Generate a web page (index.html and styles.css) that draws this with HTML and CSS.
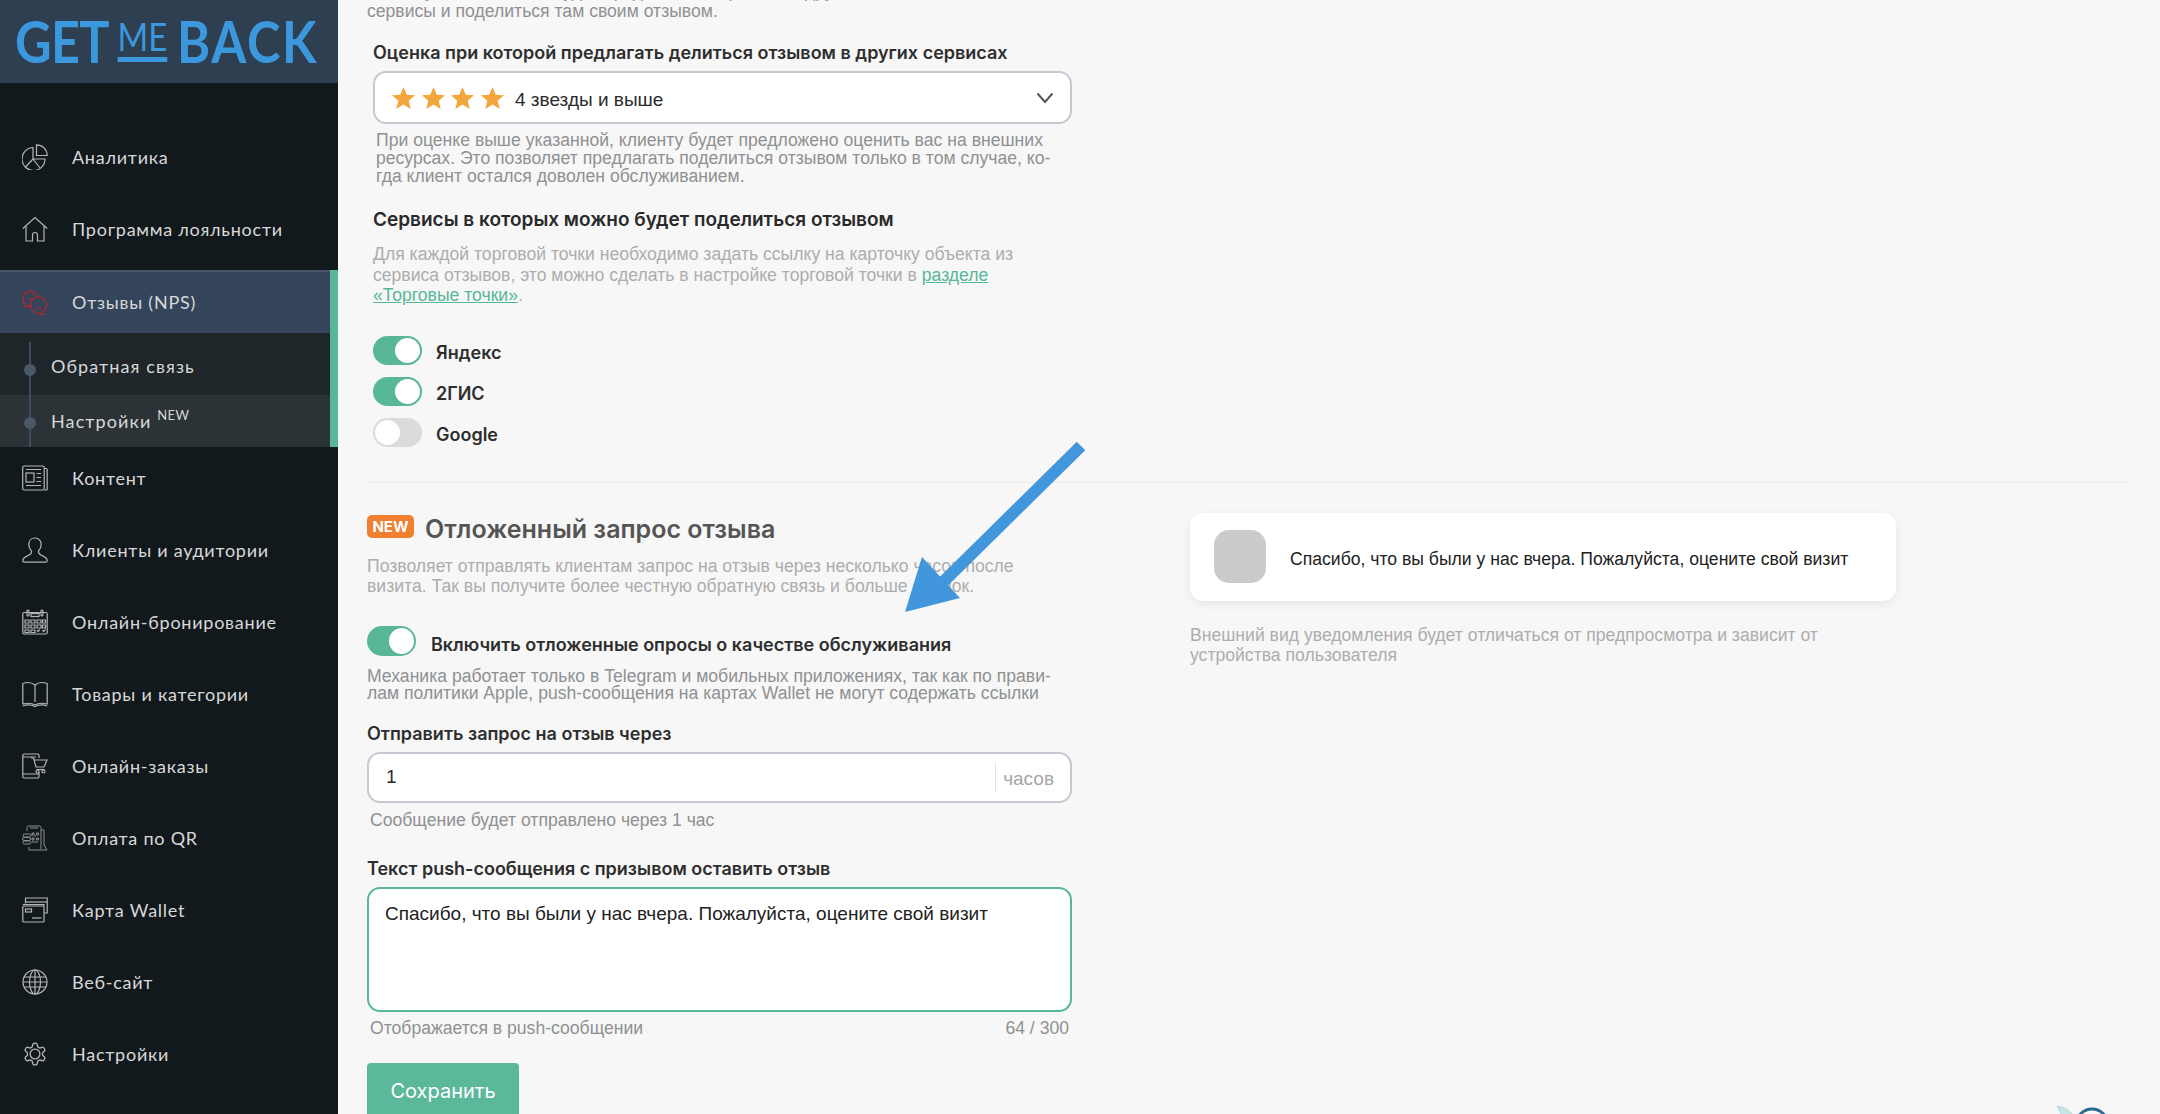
FILE: index.html
```html
<!DOCTYPE html>
<html lang="ru">
<head>
    <meta charset="UTF-8">
    <meta name="viewport" content="width=device-width, initial-scale=1.0">
    <title>GetMeBack - Отзывы (NPS)</title>
    <link rel="stylesheet" href="styles.css">
</head>
<body>
<div class="app">
    <aside class="sidebar">
        <div class="logo">
            <div class="logo-inner">
                <span class="logo-get">GET</span>
                <span class="logo-me">ME</span>
                <span class="logo-back">BACK</span>
            </div>
        </div>
        <nav class="nav">
            <a class="nav-item">
                <svg class="nav-icon" viewBox="0 0 26 26"><path d="M11 3.5A11.5 11.5 0 1 0 23 15H11Z"/><path d="M14.5 .8A10.7 10.7 0 0 1 25.2 11.5H14.5Z"/><path d="M11 15L3.5 23M11 15l7 9"/></svg>
                <span>Аналитика</span>
            </a>
            <a class="nav-item">
                <svg class="nav-icon" viewBox="0 0 26 26"><path d="M.8 12.5L13 1.5l12.2 11"/><path d="M4 10v15h6.5v-6a2.5 2.5 0 0 1 5 0v6H22V10"/></svg>
                <span>Программа лояльности</span>
            </a>
            <div class="nav-group">
                <a class="nav-item nav-active">
                    <svg class="nav-icon icon-red" viewBox="0 0 26 26"><path d="M3.5 15.5C1.5 14 .8 12 .8 9.500A7.700 7.700 0 0 1 16 8M3.500 15.500l-.5 3 4-2c1 .3 2 .4 3 .2"/><path d="M8.500 16a8 8 0 1 1 11.500 7.200l2 2.500-5-1.200A8 8 0 0 1 8.500 16Z"/><path d="M5.500 9.500q2.500 2 5 0M14 20q2.500-2 5 0"/><path d="M5.800 6.500h.8M10 6.500h.8M14.500 15h.8M18.500 15h.8"/></svg>
                    <span>Отзывы (NPS)</span>
                </a>
                <div class="sub-list">
                    <a class="sub-item">Обратная связь</a>
                    <a class="sub-item sub-active">Настройки <sup class="new-sup">NEW</sup></a>
                </div>
            </div>
            <a class="nav-item">
                <svg class="nav-icon" viewBox="0 0 26 26"><rect x=".7" y="1" width="21.500" height="24" rx="1.500"/><path d="M22.200 3.500h2a1 1 0 0 1 1 1V24a1 1 0 0 1-1 1h-2"/><rect x="4" y="8" width="8" height="9"/><path d="M4 4.500h15M14.500 8.500H19M14.500 12.500H19M14.500 16.500H19M4 20.500h15"/></svg>
                <span>Контент</span>
            </a>
            <a class="nav-item">
                <svg class="nav-icon" viewBox="0 0 26 26"><path d="M13 1c-3.800 0-6.200 2.800-6.200 6.500 0 3 1.200 5 2.700 6.500.5 2.500-1 3.500-4 4.800C3 20 .8 21 .8 23.500c0 1 .7 1.700 1.700 1.700h21c1 0 1.700-.7 1.700-1.700 0-2.500-2.200-3.500-4.700-4.700-3-1.300-4.500-2.300-4-4.800 1.500-1.500 2.700-3.500 2.700-6.500C19.200 3.800 16.800 1 13 1Z"/></svg>
                <span>Клиенты и аудитории</span>
            </a>
            <a class="nav-item">
                <svg class="nav-icon" viewBox="0 0 26 26"><rect x=".8" y="3.500" width="24.400" height="21.500" rx="1.500"/><rect x="5" y="1" width="2" height="6" rx="1"/><rect x="19" y="1" width="2" height="6" rx="1"/><rect x="9" y="4.500" width="8" height="3"/><path d="M3 11h4v3H3zM9 11h4v3H9zM15 11h4v3h-4zM20.500 11h3v3h-3zM3 16h4v3H3zM9 16h4v3H9zM15 16h4v3h-4zM20.500 16h3v3h-3zM3 21h4v2.500H3zM9 21h4v2.500H9zM15 21l1 1.500 2-2M20.500 21l1 1.500 2-2"/></svg>
                <span>Онлайн-бронирование</span>
            </a>
            <a class="nav-item">
                <svg class="nav-icon" viewBox="0 0 26 26"><path d="M13 4C10 1.500 5 1 .8 2.500V23c4-1 9-1 12.200 1 3.200-2 8.200-2 12.200-1V2.500C21 1 16 1.500 13 4Z"/><path d="M13 4v17"/><path d="M.8 25c4-1.500 9-1 12.200.5 3.200-1.500 8.200-2 12.200-.5"/></svg>
                <span>Товары и категории</span>
            </a>
            <a class="nav-item">
                <svg class="nav-icon" viewBox="0 0 26 26"><path d="M17 5V2.500A1.500 1.500 0 0 0 15.500 1H2.300A1.500 1.500 0 0 0 .8 2.500v21A1.500 1.500 0 0 0 2.300 25h13.200a1.500 1.500 0 0 0 1.500-1.500V19"/><path d="M.8 21H17M.8 4H14"/><path d="M9 5h2.500l2.500 9h8l3-7H12"/><path d="M14.500 16.500h8"/><circle cx="15.500" cy="18.500" r="1.500"/><circle cx="21.500" cy="18.500" r="1.500"/></svg>
                <span>Онлайн-заказы</span>
            </a>
            <a class="nav-item">
                <svg class="nav-icon icon-dim" viewBox="0 0 26 26"><path d="M5 6V2.500A1.500 1.500 0 0 1 6.500 1h11A1.500 1.500 0 0 1 19 2.500V24"/><path d="M19 5h3v15l3 5H7v-3"/><path d="M8 3h8"/><path d="M2.500 9h5a1.200 1.200 0 0 1 0 3h-5a1.200 1.200 0 0 1 0-3ZM2 12.500h5a1.200 1.200 0 0 1 0 3H2a1.200 1.200 0 0 1 0-3ZM2.500 16h5a1.200 1.200 0 0 1 0 3h-5a1.200 1.200 0 0 1 0-3Z"/><path d="M10 8h2v2h-2zM14.500 8h2v2h-2zM10 13h2v2h-2zM14.500 13h2v2h-2zM10 17h6M13 10v2"/></svg>
                <span>Оплата по QR</span>
            </a>
            <a class="nav-item">
                <svg class="nav-icon" viewBox="0 0 26 26"><path d="M3.500 6.500V1h21.700v15H22"/><path d="M3.500 5h21.700"/><rect x=".8" y="9" width="21.200" height="16" rx="1"/><rect x="3.500" y="12" width="6" height="3"/><path d="M10 21h9.500"/><path d="M.8 7.500h21.200V9"/></svg>
                <span>Карта Wallet</span>
            </a>
            <a class="nav-item">
                <svg class="nav-icon" viewBox="0 0 26 26"><circle cx="13" cy="13" r="12"/><ellipse cx="13" cy="13" rx="5.500" ry="12"/><path d="M13 1v24M2 8h22M1 13h24M2 18h22"/></svg>
                <span>Веб-сайт</span>
            </a>
            <a class="nav-item">
                <svg class="nav-icon" viewBox="0 0 24 24"><path d="M12.220 2h-.44a2 2 0 0 0-2 2v.18a2 2 0 0 1-1 1.730l-.43.250a2 2 0 0 1-2 0l-.15-.08a2 2 0 0 0-2.730.730l-.22.380a2 2 0 0 0 .730 2.730l.15.1a2 2 0 0 1 1 1.720v.510a2 2 0 0 1-1 1.740l-.15.090a2 2 0 0 0-.730 2.730l.22.380a2 2 0 0 0 2.730.730l.15-.08a2 2 0 0 1 2 0l.43.250a2 2 0 0 1 1 1.730V20a2 2 0 0 0 2 2h.44a2 2 0 0 0 2-2v-.18a2 2 0 0 1 1-1.730l.43-.250a2 2 0 0 1 2 0l.15.08a2 2 0 0 0 2.730-.730l.22-.390a2 2 0 0 0-.730-2.730l-.15-.08a2 2 0 0 1-1-1.740v-.5a2 2 0 0 1 1-1.740l.15-.090a2 2 0 0 0 .730-2.730l-.22-.380a2 2 0 0 0-2.730-.730l-.15.08a2 2 0 0 1-2 0l-.43-.250a2 2 0 0 1-1-1.730V4a2 2 0 0 0-2-2z"/><circle cx="12" cy="12" r="4.500"/></svg>
                <span>Настройки</span>
            </a>
        </nav>
    </aside>

    <main class="content">
        <div class="services">
            <p class="cut-text">Клиенту после отзыва будет предложено перейти на другие<br>сервисы и поделиться там своим отзывом.</p>
            <div class="field-label rating-label">Оценка при которой предлагать делиться отзывом в других сервисах</div>
            <div class="select-box">
                <svg class="star" viewBox="0 0 24 23"><path d="M12 0l3.400 8 8.600.7-6.500 5.700 2 8.600L12 18.400 4.500 23l2-8.600L0 8.700 8.600 8z"/></svg>
                <svg class="star" viewBox="0 0 24 23"><path d="M12 0l3.400 8 8.600.7-6.500 5.700 2 8.600L12 18.400 4.500 23l2-8.600L0 8.700 8.600 8z"/></svg>
                <svg class="star" viewBox="0 0 24 23"><path d="M12 0l3.400 8 8.600.7-6.500 5.700 2 8.600L12 18.400 4.500 23l2-8.600L0 8.700 8.600 8z"/></svg>
                <svg class="star" viewBox="0 0 24 23"><path d="M12 0l3.400 8 8.600.7-6.500 5.700 2 8.600L12 18.400 4.500 23l2-8.600L0 8.700 8.600 8z"/></svg>
                <span class="select-text">4 звезды и выше</span>
                <svg class="chevron" viewBox="0 0 18 12"><path d="M1.500 1.500L9 10l7.500-8.500"/></svg>
            </div>
            <p class="hint hint-rating">При оценке выше указанной, клиенту будет предложено оценить вас на внешних<br>ресурсах. Это позволяет предлагать поделиться отзывом только в том случае, ко-<br>гда клиент остался доволен обслуживанием.</p>
            <h3 class="services-title">Сервисы в которых можно будет поделиться отзывом</h3>
            <p class="muted services-text">Для каждой торговой точки необходимо задать ссылку на карточку объекта из<br>сервиса отзывов, это можно сделать в настройке торговой точки в <a class="link">разделе<br>«Торговые точки»</a>.</p>
            <div class="toggle-list">
                <div class="toggle-row"><span class="toggle on"></span><span class="toggle-text">Яндекс</span></div>
                <div class="toggle-row"><span class="toggle on"></span><span class="toggle-text">2ГИС</span></div>
                <div class="toggle-row"><span class="toggle"></span><span class="toggle-text">Google</span></div>
            </div>
        </div>

        <hr class="divider">

        <section class="delayed">
            <div class="delayed-form">
                <div class="delayed-head">
                    <span class="badge-new">NEW</span>
                    <h2>Отложенный запрос отзыва</h2>
                </div>
                <p class="muted delayed-text">Позволяет отправлять клиентам запрос на отзыв через несколько часов после<br>визита. Так вы получите более честную обратную связь и больше оценок.</p>
                <div class="toggle-row main-toggle"><span class="toggle on tall"></span><span class="toggle-text">Включить отложенные опросы о качестве обслуживания</span></div>
                <p class="hint mech-hint">Механика работает только в Telegram и мобильных приложениях, так как по прави-<br>лам политики Apple, push-сообщения на картах Wallet не могут содержать ссылки</p>
                <div class="field-label send-label">Отправить запрос на отзыв через</div>
                <div class="input-box">
                    <span class="input-value">1</span>
                    <span class="input-unit">часов</span>
                </div>
                <p class="hint under-hint">Сообщение будет отправлено через 1 час</p>
                <div class="field-label push-label">Текст push-сообщения с призывом оставить отзыв</div>
                <div class="textarea-box">Спасибо, что вы были у нас вчера. Пожалуйста, оцените свой визит</div>
                <div class="textarea-foot">
                    <span>Отображается в push-сообщении</span>
                    <span>64 / 300</span>
                </div>
                <button class="save-btn">Сохранить</button>
            </div>
            <div class="preview">
                <div class="preview-card">
                    <div class="preview-icon"></div>
                    <div class="preview-text">Спасибо, что вы были у нас вчера. Пожалуйста, оцените свой визит</div>
                </div>
                <p class="muted preview-note">Внешний вид уведомления будет отличаться от предпросмотра и зависит от<br>устройства пользователя</p>
            </div>
        </section>
    </main>

    <!-- annotation arrow drawn on top of the screenshot -->
    <svg class="arrow" viewBox="0 0 2160 1114"><path class="arrow-line" d="M1081 446L935 590"/><path class="arrow-head" d="M905 612L922 557L960 598Z"/></svg>
    <svg class="corner-logo" viewBox="0 0 60 14"><path class="corner-wing" d="M1 1c8 1 15 5 18 13H7C5 9 3 5 1 1Z"/><circle class="corner-ring" cx="36" cy="20" r="16"/></svg>
</div>
</body>
</html>
```

FILE: styles.css
```css
* {
    box-sizing: border-box;
}
html, body {
    margin: 0;
    height: 100%;
    overflow: hidden;
}
body {
    background: #f7f7f7;
    font-family: "Liberation Sans", Arial, sans-serif;
    color: #2b2b2b;
}
p, h2, h3 {
    margin: 0;
}
.app {
    position: relative;
    display: flex;
    height: 1114px;
    overflow: hidden;
}

/* sidebar */
.sidebar {
    flex: 0 0 338px;
    width: 338px;
    min-width: 0;
    overflow: hidden;
    background: #12191d;
    color: #d8d8d8;
    font-family: Lato, "Noto Sans", sans-serif;
}
.logo {
    height: 83px;
    background: #2f3f52;
    padding: 11px 0 0 15px;
    overflow: hidden;
}
.logo-inner {
    display: flex;
    align-items: flex-start;
    width: 370px;
    color: #3c98dd;
    font-family: Lato, sans-serif;
    font-weight: 700;
    font-size: 58px;
    line-height: 60px;
    transform: scaleX(.87);
    transform-origin: left top;
}
.logo-get {
    letter-spacing: -.8px;
}
.logo-back {
    margin-left: 11px;
    letter-spacing: 2px;
}
.logo-me {
    margin: 7px 0 0 10px;
    height: 44px;
    border-bottom: 5px solid #3c98dd;
    font-size: 38px;
    line-height: 37px;
    font-weight: 400;
}
.nav {
    padding-top: 43px;
}
.nav-item {
    display: flex;
    align-items: center;
    height: 64px;
    margin-bottom: 8px;
    padding: 0 0 2px 22px;
    font-size: 18px;
    letter-spacing: .75px;
}
.nav-icon {
    flex: 0 0 26px;
    width: 26px;
    height: 26px;
    margin-right: 24px;
    fill: none;
    stroke: #b3b5b6;
    stroke-width: 1.2;
}
.icon-red {
    stroke: #b4282c;
}
.icon-dim {
    stroke: #8d9091;
    stroke-width: 1;
}
.nav-group {
    border-right: 8px solid #58b798;
    background: #1e2629;
}
.nav-active {
    height: 63px;
    margin: 0;
    background: #34445a;
    border-top: 2px solid #46556a;
}
.sub-list {
    position: relative;
}
.sub-list::before {
    content: "";
    position: absolute;
    z-index: 1;
    left: 29px;
    top: 9px;
    bottom: 0;
    width: 2px;
    background: #3f4c5e;
}
.sub-item {
    position: relative;
    display: flex;
    align-items: center;
    height: 62px;
    padding: 3px 0 0 51px;
    font-size: 18px;
    letter-spacing: 1.1px;
}
.sub-item::before {
    content: "";
    position: absolute;
    z-index: 2;
    left: 24px;
    top: 31px;
    width: 12px;
    height: 12px;
    border-radius: 50%;
    background: #4a5868;
}
.sub-active {
    height: 52px;
    padding-top: 0;
    background: #2b3336;
}
.sub-active::before {
    top: 22px;
}
.new-sup {
    margin: -12px 0 0 6px;
    font-size: 13px;
    line-height: 12px;
    letter-spacing: .3px;
}

/* main area */
.content {
    flex: 1;
    min-width: 0;
    padding: 0 30px 0 29px;
}
.services {
    padding-left: 6px;
}
.cut-text {
    margin: -19px 0 0 -6px;
    font-size: 17.600px;
    line-height: 20px;
    color: #8f9192;
}
.field-label {
    font-family: Inter, "Noto Sans", sans-serif;
    font-weight: 600;
    font-size: 18px;
    line-height: 24px;
    color: #2e2e2e;
}
.rating-label {
    margin-top: 20px;
}
.select-box {
    display: flex;
    align-items: center;
    width: 699px;
    height: 53px;
    margin-top: 6px;
    padding: 0 16px 0 17px;
    background: #fff;
    border: 2px solid #c5cad2;
    border-radius: 13px;
}
.star {
    width: 23px;
    height: 22px;
    margin-right: 6.500px;
    fill: #f3a63b;
}
.select-text {
    margin: 4px 0 0 5px;
    font-size: 19px;
    color: #2b2b2b;
}
.chevron {
    width: 18px;
    height: 12px;
    margin-left: auto;
    fill: none;
    stroke: #555;
    stroke-width: 2;
}
.hint {
    font-size: 17.600px;
    line-height: 18px;
    color: #8f9192;
}
.hint-rating {
    margin: 7px 0 0 3px;
}
.services-title {
    margin-top: 22px;
    font-family: Inter, "Noto Sans", sans-serif;
    font-weight: 600;
    font-size: 19px;
    line-height: 26px;
    color: #2a2a2a;
}
.muted {
    font-size: 17.600px;
    line-height: 20.500px;
    color: #adadad;
}
.services-text {
    margin-top: 11px;
}
.link {
    color: #58b798;
    text-decoration: underline;
}
.toggle-list {
    display: flex;
    flex-direction: column;
    gap: 12px;
    margin-top: 30px;
}
.toggle-row {
    display: flex;
    align-items: center;
}
.toggle {
    display: flex;
    align-items: center;
    flex: 0 0 49px;
    width: 49px;
    height: 29px;
    padding: 2px;
    border-radius: 15px;
    background: #dbdbdb;
}
.toggle::after {
    content: "";
    width: 25px;
    height: 25px;
    border-radius: 50%;
    background: #fff;
}
.toggle.on {
    justify-content: flex-end;
    background: #58b798;
}
.toggle.tall {
    height: 30px;
    border-radius: 15px;
}
.toggle.tall::after {
    height: 26px;
}
.toggle-text {
    margin: 5px 0 0 14px;
    font-family: Inter, "Noto Sans", sans-serif;
    font-weight: 600;
    font-size: 18px;
    line-height: 20px;
    color: #2e2e2e;
}
.divider {
    height: 1px;
    margin: 35px 0 0;
    border: 0;
    background: #ebebeb;
}

/* delayed request */
.delayed {
    display: grid;
    grid-template-columns: 705px 706px;
    column-gap: 118px;
    margin-top: 28px;
}
.delayed-head {
    display: flex;
    align-items: center;
    height: 36px;
}
.badge-new {
    width: 47px;
    height: 23px;
    margin: 0 11px 5px 0;
    border-radius: 5px;
    background: #f0802f;
    color: #fff;
    font-family: Inter, "Noto Sans", sans-serif;
    font-weight: 700;
    font-size: 15px;
    line-height: 23px;
    text-align: center;
}
.delayed-head h2 {
    font-family: Inter, "Noto Sans", sans-serif;
    font-weight: 600;
    font-size: 25px;
    line-height: 36px;
    color: #555;
}
.delayed-text {
    margin-top: 9px;
}
.main-toggle {
    margin-top: 29px;
}
.main-toggle .toggle-text {
    margin-left: 15px;
    margin-top: 8px;
}
.mech-hint {
    margin-top: 12.500px;
    line-height: 17px;
}
.send-label {
    margin-top: 19.500px;
}
.input-box {
    display: flex;
    align-items: center;
    height: 51px;
    margin-top: 6px;
    padding: 0 16px 0 17px;
    background: #fff;
    border: 2px solid #c5cad2;
    border-radius: 13px;
}
.input-value {
    flex: 1;
    font-size: 19px;
    color: #2b2b2b;
}
.input-unit {
    height: 31px;
    padding-left: 7px;
    border-left: 1px solid #e6e6e6;
    font-size: 19px;
    line-height: 33px;
    color: #a6a6a6;
}
.under-hint {
    margin: 7px 0 0 3px;
    line-height: 20px;
}
.push-label {
    margin-top: 27px;
}
.textarea-box {
    height: 125px;
    margin-top: 6px;
    padding: 14px 16px;
    background: #fff;
    border: 2px solid #58b798;
    border-radius: 13px;
    font-size: 19px;
    line-height: 22px;
    color: #222;
}
.textarea-foot {
    display: flex;
    justify-content: space-between;
    margin-top: 6px;
    padding: 0 3px;
    font-size: 17.600px;
    line-height: 20px;
    color: #8f9192;
}
.save-btn {
    display: block;
    width: 152px;
    height: 56px;
    margin-top: 25px;
    border: none;
    border-radius: 4px;
    background: #5bb89a;
    color: #fff;
    font-family: Inter, "Noto Sans", sans-serif;
    font-size: 20px;
}

/* preview column */
.preview {
    padding-top: 2px;
}
.preview-card {
    display: flex;
    align-items: center;
    height: 88px;
    padding: 0 24px;
    background: #fff;
    border-radius: 13px;
    box-shadow: 0 3px 10px rgba(0, 0, 0, .07);
}
.preview-icon {
    flex: 0 0 52px;
    height: 53px;
    margin-right: 24px;
    border-radius: 15px;
    background: #cbcbcb;
}
.preview-text {
    margin-top: 5px;
    font-size: 17.600px;
    color: #222;
}
.preview-note {
    margin-top: 24px;
}

/* things on top */
.arrow {
    position: absolute;
    left: 0;
    top: 0;
    width: 2160px;
    height: 1114px;
    pointer-events: none;
}
.arrow-line {
    fill: none;
    stroke: #4297dc;
    stroke-width: 12;
}
.arrow-head {
    fill: #4297dc;
}
.corner-logo {
    position: absolute;
    left: 2056px;
    top: 1105px;
    width: 60px;
    height: 14px;
}
.corner-wing {
    fill: #c7e4e7;
    stroke: #a8c4c8;
    stroke-width: .5;
}
.corner-ring {
    fill: none;
    stroke: #2c6a90;
    stroke-width: 3;
}
```
